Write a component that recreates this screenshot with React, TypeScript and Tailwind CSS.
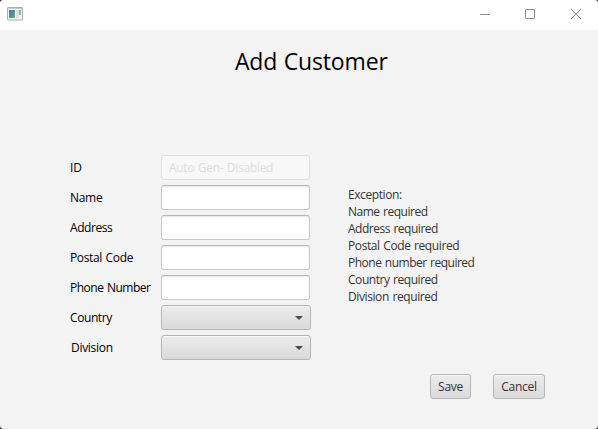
import React from "react";

type Field = { label: string; kind: "disabled" | "text" | "select"; text: string };

const fields: Field[] = [
  { label: "ID", kind: "disabled", text: "tracking-[-0.2px]" },
  { label: "Name", kind: "text", text: "tracking-[-0.3px]" },
  { label: "Address", kind: "text", text: "tracking-[-0.42px]" },
  { label: "Postal Code", kind: "text", text: "tracking-[-0.35px]" },
  { label: "Phone Number", kind: "text", text: "tracking-[-0.48px]" },
  { label: "Country", kind: "select", text: "tracking-[-0.42px]" },
  { label: "Division", kind: "select", text: "pl-px tracking-[-0.3px]" },
];

const errors = [
  { text: "Exception:", spacing: "tracking-[-0.42px]" },
  { text: "Name required", spacing: "tracking-[-0.48px]" },
  { text: "Address required", spacing: "tracking-[-0.48px]" },
  { text: "Postal Code required", spacing: "tracking-[-0.4px]" },
  { text: "Phone number required", spacing: "tracking-[-0.5px]" },
  { text: "Country required", spacing: "tracking-[-0.45px]" },
  { text: "Division required", spacing: "tracking-[-0.4px]" },
];

function TitleBar() {
  return (
    <header className="flex h-[30px] items-start justify-between bg-white">
      <svg className="ml-[7px] mt-[7px]" width="16" height="14" viewBox="0 0 16 14">
        <defs>
          <linearGradient id="pane" x1="0" y1="0" x2="1" y2="1">
            <stop offset="0" stopColor="#3d78b4" />
            <stop offset="1" stopColor="#5bb07c" />
          </linearGradient>
        </defs>
        <rect x="0.5" y="0.5" width="15" height="12.5" rx="0.5" fill="#f3f3f3" stroke="#a9adb6" />
        <path d="M1 1.5h14" stroke="#c6cad2" />
        <rect x="2" y="3" width="6" height="8" fill="url(#pane)" />
        <rect x="9" y="3" width="2.5" height="8" fill="#dedede" />
        <rect x="12" y="3" width="2" height="5" fill="url(#pane)" opacity="0.65" />
      </svg>
      <svg width="118" height="30" viewBox="480 0 118 30" fill="none" stroke="#8c8c8c">
        <path d="M480 14.5h10" />
        <rect x="525.5" y="9.5" width="9" height="9" rx="0.5" />
        <path d="M571 9.2l10 9.8M581 9.2l-10 9.8" />
      </svg>
    </header>
  );
}

function Control({ kind }: { kind: Field["kind"] }) {
  if (kind === "select") {
    return (
      <button className="flex h-[25px] w-[150px] items-center justify-end rounded-[3px] border border-[#b5b5b5] bg-linear-to-b from-[#ececec] to-[#dadada] pr-[7px] shadow-[inset_0_1px_0_#f8f8f8]">
        <svg width="8" height="4" viewBox="0 0 8 4">
          <path d="M0 0h8L4 4z" fill="#4b4b4b" />
        </svg>
      </button>
    );
  }
  if (kind === "disabled") {
    return (
      <div className="h-[25px] w-[149px] rounded-[3px] border border-[#dedede] bg-[#f8f8f8] pl-[7px] leading-[24px] tracking-[-0.3px] text-[#dcdcdc]">
        Auto Gen- Disabled
      </div>
    );
  }
  return (
    <div className="h-[25px] w-[149px] rounded-[3px] border border-[#c8c8c8] border-t-[#b4b4b4] bg-white shadow-[inset_0_2px_2px_-1px_#e6e6e6]" />
  );
}

const buttonStyle =
  "h-[25px] rounded-[3px] border border-[#b5b5b5] bg-linear-to-b from-[#ececec] to-[#dadada] text-center leading-[24px] text-[#333333] shadow-[inset_0_1px_0_#f8f8f8] tracking-[-0.3px]";

export default function App() {
  return (
    <div className="h-[429px] w-[598px] bg-[#3c3c3c]">
      <div className="flex h-full flex-col overflow-hidden rounded-[4px] bg-[#f3f3f3] font-['Open_Sans','Noto_Sans',sans-serif] text-[12px] text-black [word-spacing:0.8px]">
        <TitleBar />
        <h1 className="mt-[13px] h-[36px] pl-[235px] text-[23px] leading-[36px] tracking-[-0.17px] whitespace-nowrap">
          Add Customer
        </h1>
        <main className="mt-[76px] flex h-[205px] pl-[70px]">
          <div className="flex w-[241px] flex-col gap-[5px]">
            {fields.map((field) => (
              <div key={field.label} className="flex h-[25px]">
                <span className={`w-[91px] shrink-0 leading-[25px] whitespace-nowrap ${field.text}`}>{field.label}</span>
                <Control kind={field.kind} />
              </div>
            ))}
          </div>
          <div className="ml-[37px] mt-[31px] leading-[17px] whitespace-nowrap text-[#333333]">
            {errors.map((line) => (
              <div key={line.text} className={line.spacing}>
                {line.text}
              </div>
            ))}
          </div>
        </main>
        <footer className="mt-[14px] flex gap-[22px] pl-[430px]">
          <button className={`${buttonStyle} w-[41px]`}>Save</button>
          <button className={`${buttonStyle} w-[52px]`}>Cancel</button>
        </footer>
      </div>
    </div>
  );
}
